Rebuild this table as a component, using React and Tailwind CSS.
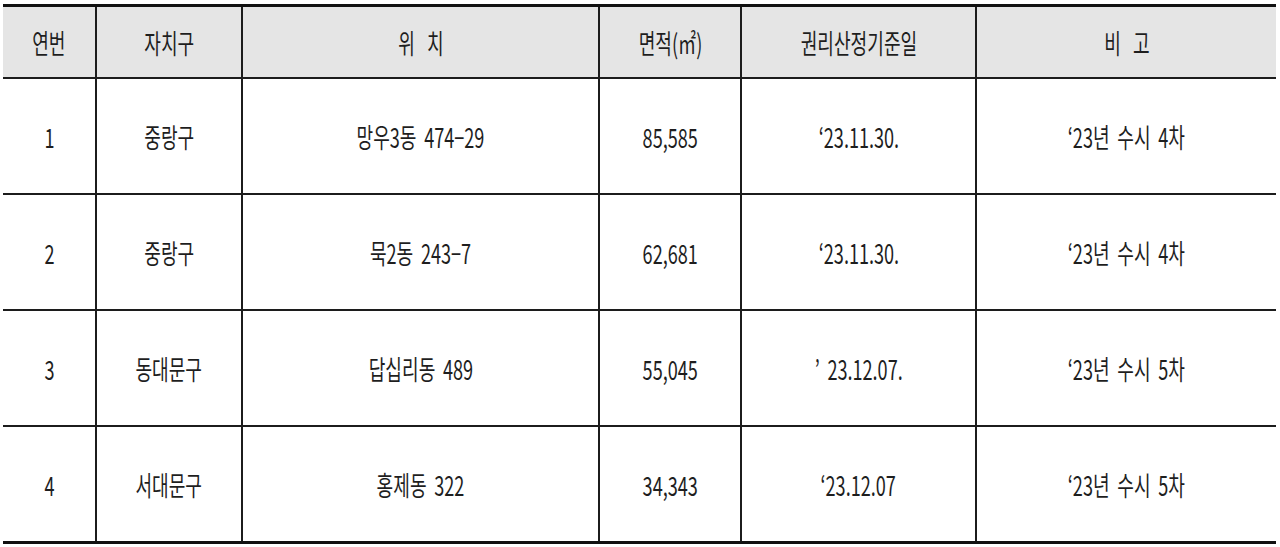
import React from 'react';

const COLS = 'grid grid-cols-[94px_146px_357px_142px_235px_299px]';

const HEAD = ['연번', '자치구', '위 치', '면적(㎡)', '권리산정기준일', '비 고'];

const ROWS = [
  ['1', '중랑구', '망우3동 474−29', '85,585', '‘23.11.30.', '‘23년 수시 4차'],
  ['2', '중랑구', '묵2동 243−7', '62,681', '‘23.11.30.', '‘23년 수시 4차'],
  ['3', '동대문구', '답십리동 489', '55,045', '’ 23.12.07.', '‘23년 수시 5차'],
  ['4', '서대문구', '홍제동 322', '34,343', '‘23.12.07', '‘23년 수시 5차'],
];

function Cell({ children, last, head }) {
  return (
    <div
      className={`flex items-center justify-center ${last ? '' : 'border-r-2 border-[#1c1c1c]'}`}
    >
      <span
        className={`inline-block scale-x-[0.67] whitespace-nowrap ${head ? '[word-spacing:0.45em]' : '[word-spacing:0.2em]'}`}
      >
        {children}
      </span>
    </div>
  );
}

export default function App() {
  return (
    <div
      className="bg-white w-[1280px] h-[547px] pt-[4px] pl-[3px] text-[#1e1e1e] text-[27px] leading-none"
      style={{ fontFamily: '"Noto Sans CJK KR", "Noto Sans", sans-serif' }}
    >
      <div className="w-[1273px] border-t-[3px] border-b-[3px] border-[#111]">
        {/* header */}
        <div className={`${COLS} h-[72px] bg-[#e5e5e5] border-b-2 border-[#1c1c1c]`}>
          {HEAD.map((h, i) => (
            <Cell key={h} head last={i === HEAD.length - 1}>{h}</Cell>
          ))}
        </div>

        {ROWS.map((r, ri) => (
          <div
            key={ri}
            className={`${COLS} ${ri === ROWS.length - 1 ? 'h-[114px]' : 'h-[116px] border-b-2 border-[#1c1c1c]'}`}
          >
            {r.map((v, i) => (
              <Cell key={i} last={i === r.length - 1}>{v}</Cell>
            ))}
          </div>
        ))}
      </div>
    </div>
  );
}
